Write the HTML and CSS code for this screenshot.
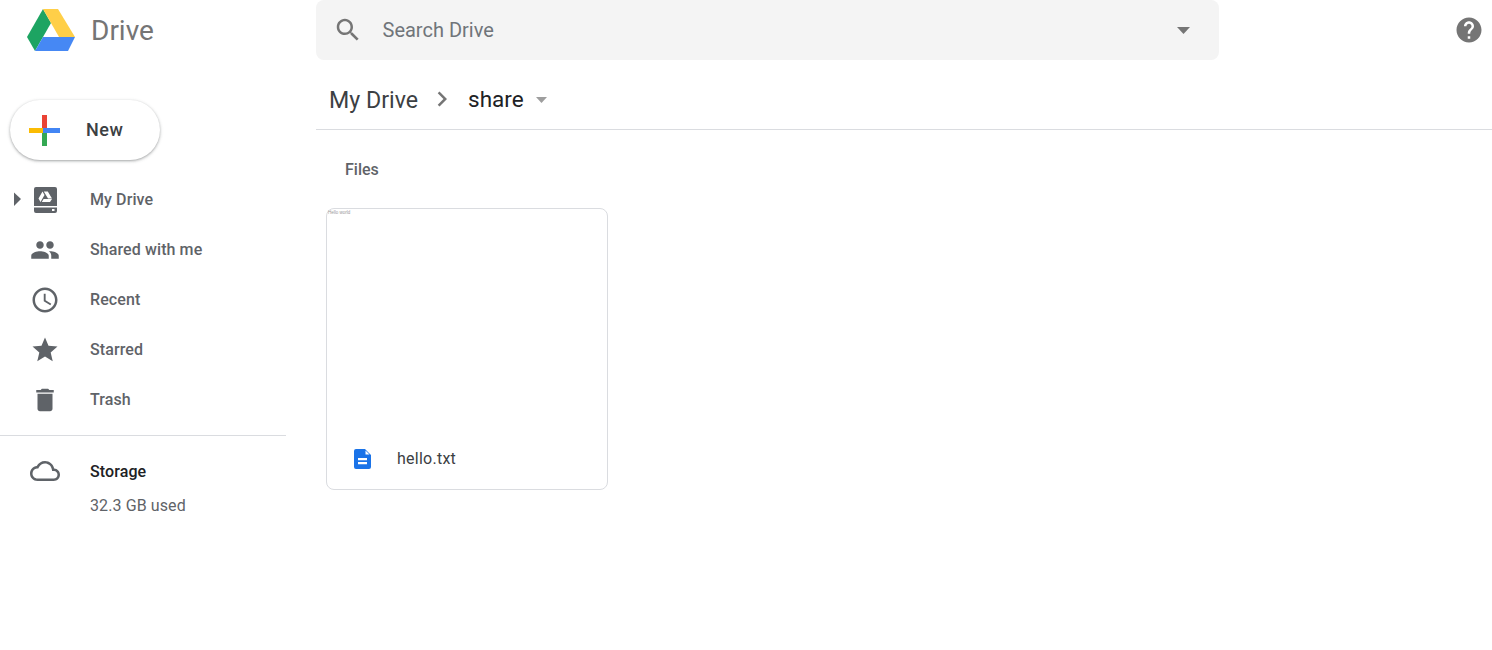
FILE: index.html
```html
<!DOCTYPE html>
<html lang="en">
<head>
  <meta charset="UTF-8" />
  <title>share - Google Drive</title>
  <link rel="stylesheet" href="styles.css">
</head>
<body>
  <aside class="sidebar">
    <div class="brand">
      <svg class="brand-logo" viewBox="0 0 48 42">
        <polygon fill="#1da462" points="16,0 24,14 8,42 0,28"/>
        <polygon fill="#ffcf48" points="16,0 31,0 48,28 32,28"/>
        <polygon fill="#4688f4" points="16,28 48,28 41,42 8,42"/>
      </svg>
      <span class="brand-name">Drive</span>
    </div>

    <button class="new-btn">
      <svg class="new-plus" viewBox="0 0 31 31">
        <rect fill="#ea4335" x="13" y="0" width="5" height="16"/>
        <rect fill="#34a853" x="13" y="16" width="5" height="15"/>
        <rect fill="#fbbc04" x="0" y="13" width="14" height="5"/>
        <rect fill="#4285f4" x="14" y="13" width="17" height="5"/>
      </svg>
      <span class="new-text">New</span>
    </button>

    <nav class="nav">
      <div class="nav-row">
        <svg class="caret" viewBox="0 0 16 50"><polygon points="0,18.500 7,25 0,32"/></svg>
        <svg class="nav-icon" viewBox="0 0 30 30">
          <path fill-rule="evenodd" d="M6 2h19a2 2 0 0 1 2 2v17H4V4a2 2 0 0 1 2-2zM12.500 6.500l-4 7 2 3.500 4-7zM13.800 6.500l4.200 7h4l-4.200-7zM11.800 17h8.200l2-3h-8.400z"/>
          <path fill-rule="evenodd" d="M4 22.500h23V26a2 2 0 0 1-2 2H6a2 2 0 0 1-2-2zM22 24v2h2.500v-2z"/>
        </svg>
        <span class="nav-label">My Drive</span>
      </div>
      <div class="nav-row">
        <span class="caret"></span>
        <svg class="nav-icon" viewBox="0 0 24 24"><path d="M16 11c1.660 0 2.990-1.340 2.990-3S17.660 5 16 5c-1.660 0-3 1.340-3 3s1.340 3 3 3zm-8 0c1.660 0 2.990-1.340 2.990-3S9.660 5 8 5C6.340 5 5 6.340 5 8s1.340 3 3 3zm0 2c-2.330 0-7 1.170-7 3.500V19h14v-2.500c0-2.330-4.670-3.500-7-3.500zm8 0c-.290 0-.620.020-.970.050 1.160.840 1.970 1.970 1.970 3.450V19h6v-2.500c0-2.330-4.670-3.500-7-3.500z"/></svg>
        <span class="nav-label">Shared with me</span>
      </div>
      <div class="nav-row">
        <span class="caret"></span>
        <svg class="nav-icon" viewBox="0 0 24 24"><path d="M11.990 2C6.470 2 2 6.480 2 12s4.470 10 9.990 10C17.520 22 22 17.520 22 12S17.520 2 11.990 2zM12 20c-4.420 0-8-3.580-8-8s3.580-8 8-8 8 3.580 8 8-3.580 8-8 8zm.5-13H11v6l5.250 3.150.75-1.230-4.500-2.670z"/></svg>
        <span class="nav-label">Recent</span>
      </div>
      <div class="nav-row">
        <span class="caret"></span>
        <svg class="nav-icon" viewBox="0 0 24 24"><path d="M12 17.270L18.180 21l-1.640-7.030L22 9.240l-7.190-.610L12 2 9.190 8.630 2 9.240l5.460 4.730L5.820 21z"/></svg>
        <span class="nav-label">Starred</span>
      </div>
      <div class="nav-row">
        <span class="caret"></span>
        <svg class="nav-icon" viewBox="0 0 24 24"><path d="M6 19c0 1.100.9 2 2 2h8c1.100 0 2-.9 2-2V7H6v12zM19 4h-3.500l-1-1h-5l-1 1H5v2h14V4z"/></svg>
        <span class="nav-label">Trash</span>
      </div>
    </nav>

    <div class="sidebar-rule"></div>

    <div class="nav-row storage-row">
      <span class="caret"></span>
      <svg class="nav-icon" viewBox="0 0 24 24"><path d="M19.350 10.040C18.670 6.590 15.640 4 12 4 9.110 4 6.600 5.640 5.350 8.040 2.340 8.360 0 10.910 0 14c0 3.310 2.690 6 6 6h13c2.760 0 5-2.240 5-5 0-2.640-2.050-4.780-4.650-4.960zM19 18H6c-2.210 0-4-1.790-4-4 0-2.050 1.530-3.760 3.560-3.970l1.070-.110.5-.950C8.080 7.140 9.940 6 12 6c2.620 0 4.880 1.860 5.390 4.430l.3 1.500 1.530.110c1.560.1 2.780 1.410 2.780 2.960 0 1.650-1.350 3-3 3z"/></svg>
      <span class="nav-label storage-label">Storage</span>
    </div>
    <div class="storage-used">32.3 GB used</div>
  </aside>

  <main class="main">
    <header class="topbar">
      <div class="search">
        <svg class="search-icon" viewBox="0 0 24 24"><path d="M15.500 14h-.790l-.280-.270C15.410 12.590 16 11.110 16 9.500 16 5.910 13.090 3 9.500 3S3 5.910 3 9.500 5.910 16 9.500 16c1.610 0 3.090-.590 4.230-1.570l.270.280v.790l5 4.990L20.490 19l-4.990-5zm-6 0C7.010 14 5 11.990 5 9.500S7.010 5 9.500 5 14 7.010 14 9.500 11.990 14 9.500 14z"/></svg>
        <input class="search-input" type="text" placeholder="Search Drive" />
        <svg class="search-caret" viewBox="0 0 13 7"><polygon points="0,0 13,0 6.500,7"/></svg>
      </div>
      <svg class="help" viewBox="0 0 24 24"><path d="M12 2C6.480 2 2 6.480 2 12s4.480 10 10 10 10-4.480 10-10S17.520 2 12 2zm1 17h-2v-2h2v2zm2.070-7.750l-.9.920C13.450 12.900 13 13.500 13 15h-2v-.5c0-1.100.450-2.100 1.170-2.830l1.240-1.260c.370-.360.590-.860.590-1.410 0-1.100-.9-2-2-2s-2 .9-2 2H8c0-2.210 1.790-4 4-4s4 1.790 4 4c0 .880-.360 1.680-.930 2.250z"/></svg>
    </header>

    <div class="crumbs">
      <span class="crumb-parent">My Drive</span>
      <svg class="crumb-sep" viewBox="0 0 24 24"><path d="M10 6L8.590 7.410 13.170 12l-4.580 4.590L10 18l6-6z"/></svg>
      <span class="crumb-current">share</span>
      <svg class="crumb-caret" viewBox="0 0 13 7"><polygon points="0,0 13,0 6.500,7"/></svg>
    </div>

    <h2 class="section-title">Files</h2>

    <div class="file-card">
      <div class="file-preview">Hello world</div>
      <div class="file-footer">
        <svg class="file-icon" viewBox="0 0 17 20">
          <path fill="#1a73e8" fill-rule="evenodd" d="M2 0h9l6 6v12a2 2 0 0 1-2 2H2a2 2 0 0 1-2-2V2a2 2 0 0 1 2-2zM11.500 1.500V5.500H15.500zM4 9v2.300h9V9zM4 13v2.300h9V13z"/>
        </svg>
        <span class="file-name">hello.txt</span>
      </div>
    </div>
  </main>
</body>
</html>
```

FILE: styles.css
```css
body {
  margin: 0;
  height: 650px;
  overflow: hidden;
  display: flex;
  font-family: Roboto, "Liberation Sans", sans-serif;
  background: #fff;
  color: #202124;
}

.sidebar {
  width: 286px;
  flex: none;
}
.brand {
  height: 60px;
  display: flex;
  align-items: center;
  padding-left: 27px;
}
.brand-logo {
  width: 48px;
  height: 42px;
}
.brand-name {
  margin-left: 16px;
  font-size: 28px;
  color: #757575;
}

.new-btn {
  display: flex;
  align-items: center;
  width: 150px;
  height: 60px;
  margin: 40px 0 14px 10px;
  padding: 0 0 0 19px;
  border: none;
  border-radius: 30px;
  background: #fff;
  box-shadow: 0 1px 2px rgba(60, 64, 67, .3), 0 1px 3px 1px rgba(60, 64, 67, .15);
  font-family: inherit;
  font-size: 18px;
  font-weight: 500;
  color: #3c4043;
}
.new-plus {
  width: 31px;
  height: 31px;
  margin-right: 26px;
}
.new-text {
  margin-bottom: 2px;
  letter-spacing: .5px;
}

.nav-row {
  height: 50px;
  display: flex;
  align-items: center;
  padding-left: 14px;
}
.caret {
  width: 16px;
  height: 50px;
  flex: none;
  fill: #5f6368;
}
.nav-icon {
  width: 30px;
  height: 30px;
  margin-top: 2px;
  flex: none;
  fill: #5f6368;
}
.nav-label {
  margin-left: 30px;
  font-size: 16px;
  font-weight: 500;
  letter-spacing: .1px;
  color: #5f6368;
}
.sidebar-rule {
  height: 1px;
  margin-top: 11px;
  background: #dadce0;
}
.storage-row {
  margin-top: 10px;
}
.storage-row .nav-icon {
  margin-top: 0;
}
.storage-label {
  color: #202124;
}
.storage-used {
  padding-left: 90px;
  font-size: 16px;
  line-height: 20px;
  letter-spacing: .1px;
  color: #5f6368;
}

.main {
  flex: 1;
  margin-left: 30px;
  min-width: 0;
}
.topbar {
  height: 60px;
  display: flex;
  align-items: center;
}
.search {
  width: 903px;
  height: 60px;
  display: flex;
  align-items: center;
  box-sizing: border-box;
  padding: 0 29px 0 17px;
  background: #f4f4f4;
  border-radius: 8px;
}
.search-icon {
  width: 30px;
  height: 30px;
  flex: none;
  fill: #757575;
}
.search-input {
  flex: 1;
  min-width: 0;
  margin-left: 19.500px;
  padding: 0;
  border: none;
  outline: none;
  background: transparent;
  font-family: inherit;
  font-size: 20px;
}
.search-input::placeholder {
  color: #70757a;
  opacity: 1;
}
.search-caret {
  width: 13px;
  height: 7px;
  flex: none;
  fill: #757575;
}
.help {
  width: 30px;
  height: 30px;
  margin-left: auto;
  margin-right: 8px;
  fill: #757575;
}

.crumbs {
  height: 60px;
  padding: 9px 0 0 13px;
  display: flex;
  align-items: center;
  border-bottom: 1px solid #dadce0;
  font-size: 23.200px;
}
.crumb-parent {
  margin-top: 2px;
  color: #3c4043;
}
.crumb-sep {
  width: 30px;
  height: 30px;
  margin: 0 11px 0 9px;
  fill: #757575;
}
.crumb-current {
  font-size: 22.500px;
}
.crumb-caret {
  width: 11px;
  height: 6px;
  margin: 2px 0 0 12px;
  fill: #9e9e9e;
}

.section-title {
  margin: 29px 0 29px 29px;
  padding-top: 1px;
  font-size: 16px;
  line-height: 20px;
  font-weight: 500;
  color: #5f6368;
}

.file-card {
  width: 282px;
  height: 282px;
  margin-left: 10px;
  margin-top: -1px;
  box-sizing: border-box;
  display: flex;
  flex-direction: column;
  border: 1px solid #dadce0;
  border-radius: 8px;
}
.file-preview {
  flex: 1;
  padding: 1px;
  font-family: "Liberation Sans", sans-serif;
  font-size: 4.500px;
  line-height: 5px;
  color: #999;
}
.file-footer {
  height: 60px;
  display: flex;
  align-items: center;
  padding-left: 27px;
}
.file-icon {
  width: 17px;
  height: 20px;
  flex: none;
}
.file-name {
  margin-left: 26px;
  margin-bottom: 2px;
  font-size: 16px;
  letter-spacing: .25px;
  color: #3c4043;
}
```
